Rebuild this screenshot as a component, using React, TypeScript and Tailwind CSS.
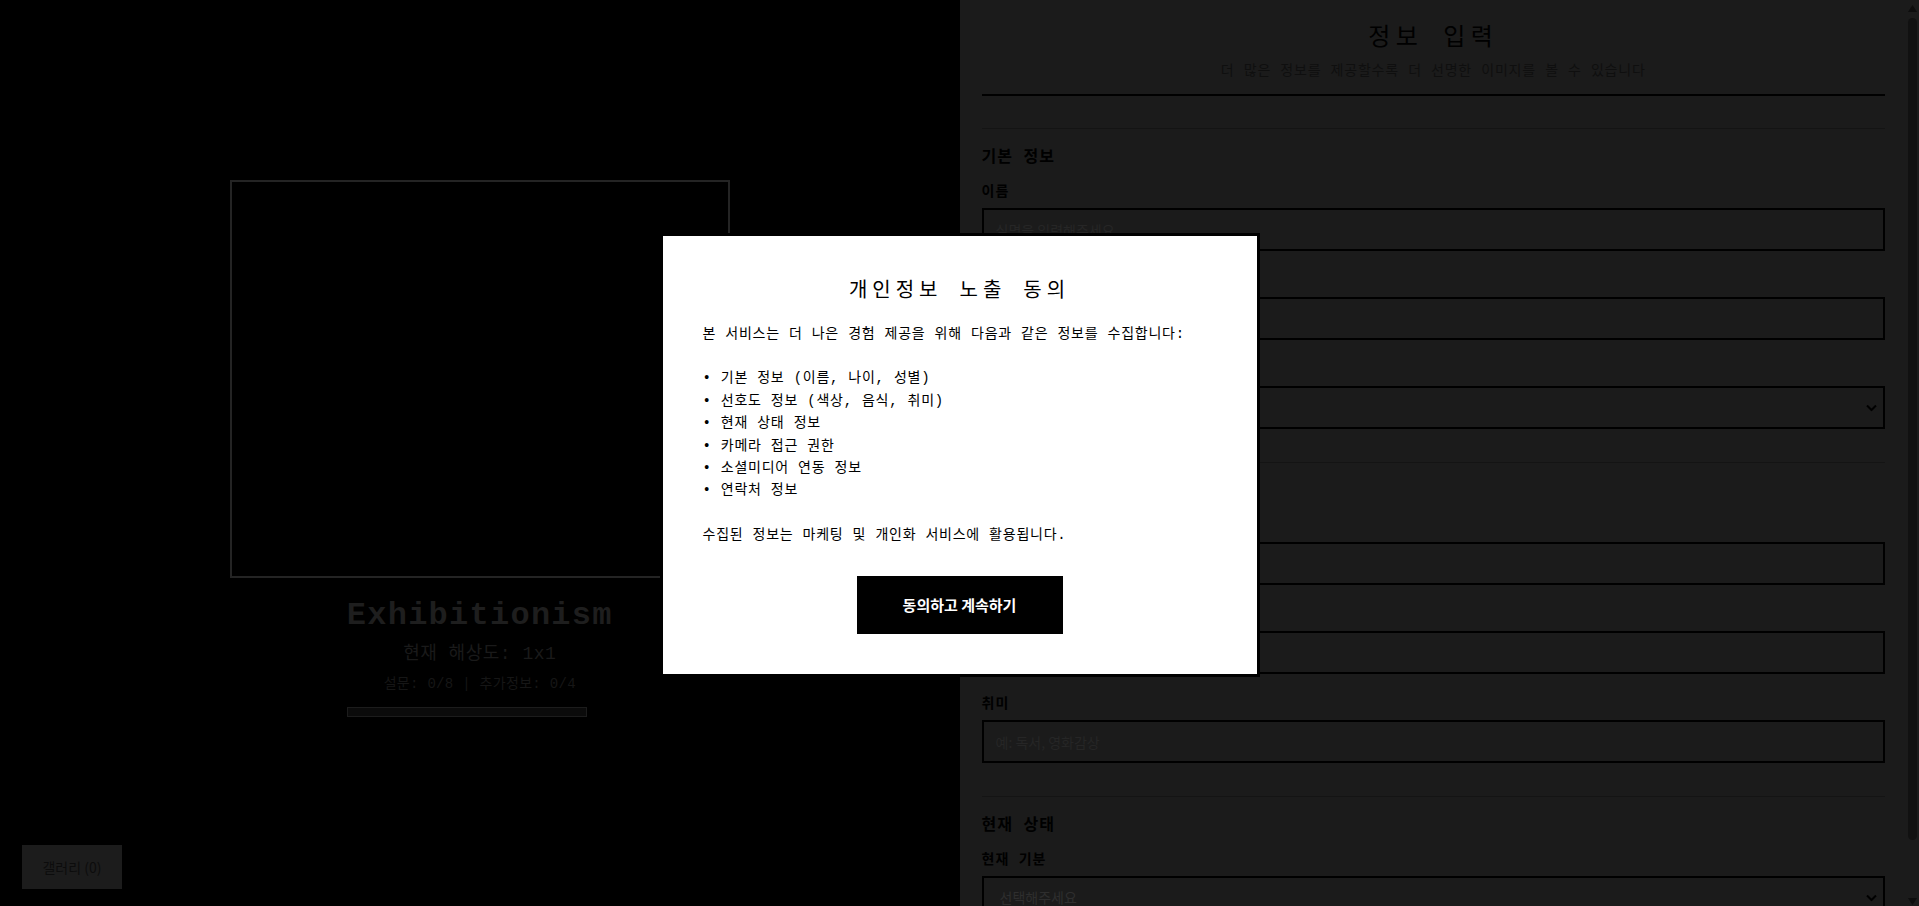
import React from 'react';

const mono = "font-['Liberation_Mono','Noto_Sans_CJK_KR',monospace]";
const sans = "font-['Noto_Sans_CJK_KR','Noto_Sans',sans-serif]";

interface FieldProps {
  label: string;
  placeholder?: string;
  select?: boolean;
}

const Chevron: React.FC = () => (
  <svg
    className="pointer-events-none absolute right-[8px] top-1/2 -translate-y-1/2"
    width="11"
    height="7"
    viewBox="0 0 11 7"
    fill="none"
  >
    <polyline points="1,1 5.5,5.5 10,1" stroke="#000" strokeWidth="2" />
  </svg>
);

const Field: React.FC<FieldProps> = ({ label, placeholder, select }) => (
  <div className="flex flex-col">
    <label className="mb-[6px] text-[14px] leading-[20px] font-bold tracking-[1px] text-black">{label}</label>
    {select ? (
      <div className="relative">
        <select
          defaultValue=""
          className={`${sans} h-[43px] w-full appearance-none border-2 border-black bg-transparent pl-4 text-[14px] text-[#2e2e2e] outline-none`}
        >
          <option value="">선택해주세요</option>
        </select>
        <Chevron />
      </div>
    ) : (
      <input
        placeholder={placeholder}
        className={`${sans} h-[43px] w-full border-2 border-black bg-transparent px-3 text-[14px] text-black outline-none placeholder:text-[#262626]`}
      />
    )}
  </div>
);

const Section: React.FC<{ title: string; children: React.ReactNode }> = ({ title, children }) => (
  <section className="border-t border-[#141414] pt-[17px] pb-[33px]">
    <h3 className="mb-3 text-[16px] leading-[24px] font-bold tracking-[1px] text-black">{title}</h3>
    <div className="flex flex-col gap-5">{children}</div>
  </section>
);

// the page scrollbar, drawn since the screenshot browser hides native ones
const ScrollTrack: React.FC = () => (
  <div className="flex w-[15px] shrink-0 flex-col items-center bg-[#1b1b1b] pl-[1px]">
    <svg className="mt-[5px]" width="9" height="7" viewBox="0 0 9 7">
      <polygon points="4.5,0 9,7 0,7" fill="#0d0d0d" />
    </svg>
    <div className="mt-[6px] h-[822px] w-[9px] rounded-full bg-[#111]" />
    <div className="flex-1" />
    <svg className="mb-[1px]" width="9" height="7" viewBox="0 0 9 7">
      <polygon points="0,0 9,0 4.5,7" fill="#0d0d0d" />
    </svg>
  </div>
);

const consentText = `본 서비스는 더 나은 경험 제공을 위해 다음과 같은 정보를 수집합니다:

• 기본 정보 (이름, 나이, 성별)
• 선호도 정보 (색상, 음식, 취미)
• 현재 상태 정보
• 카메라 접근 권한
• 소셜미디어 연동 정보
• 연락처 정보

수집된 정보는 마케팅 및 개인화 서비스에 활용됩니다.`;

export default function App() {
  return (
    <div className={`${mono} flex h-[906px] w-full overflow-hidden`}>
      {/* left: preview */}
      <div className="flex w-1/2 flex-col items-center justify-center bg-black pb-[9px]">
        <div className="h-[398px] w-[500px] border-2 border-[#242424]" />
        <div className="text-center">
          <h1 className="mt-[18px] text-[32px] leading-[40px] font-bold tracking-[1.25px] text-[#1e1e1e]">Exhibitionism</h1>
          <p className="mt-[6px] text-[18px] leading-[24px] tracking-[0.5px] text-[#1a1a1a]">현재 해상도: 1x1</p>
          <p className="mt-2 text-[14px] leading-[20px] tracking-[0.3px] text-[#161616]">설문: 0/8 | 추가정보: 0/4</p>
          <div className="mt-[13px] h-[10px] w-[240px] border border-[#1c1c1c] bg-[#0b0b0b]" />
        </div>
      </div>

      {/* right: form */}
      <div className="flex h-full w-1/2 bg-[#1b1b1b]">
        <div className="h-full flex-1 overflow-y-auto pt-5 pr-[19px] pb-5 pl-[22px]">
          <header className="mb-[32px] border-b-2 border-black pb-[13px] text-center">
            <h2 className="mt-[4px] text-[24px] leading-[30px] tracking-[5.5px] text-black">정보 입력</h2>
            <p className="mt-[7px] text-[14px] leading-[20px] tracking-[0.8px] text-[#0f0f0f]">
              더 많은 정보를 제공할수록 더 선명한 이미지를 볼 수 있습니다
            </p>
          </header>

          <Section title="기본 정보">
            <Field label="이름" placeholder="실명을 입력해주세요" />
            <Field label="나이" placeholder="나이를 입력해주세요" />
            <Field label="성별" select />
          </Section>

          <Section title="선호도">
            <Field label="좋아하는 색상" placeholder="예: 빨강, 파랑" />
            <Field label="좋아하는 음식" placeholder="예: 피자, 초밥" />
            <Field label="취미" placeholder="예: 독서, 영화감상" />
          </Section>

          <Section title="현재 상태">
            <Field label="현재 기분" select />
          </Section>
        </div>
        <ScrollTrack />
      </div>

      <button
        className={`${sans} fixed bottom-[17px] left-[22px] h-[44px] w-[100px] bg-[#1c1c1c] text-[14px] text-[#0c0c0c]`}
      >
        갤러리 (0)
      </button>

      {/* consent modal */}
      <div className="fixed inset-0 z-50 flex items-center justify-center pt-[4px]">
        <div className="w-[600px] border-[3px] border-black bg-white p-10">
          <h2 className="mt-[2px] mb-[17px] text-center text-[20px] leading-[28px] tracking-[5px] text-black">개인정보 노출 동의</h2>
          <p className="text-[14px] leading-[1.6] tracking-[0.75px] whitespace-pre-line text-black">{consentText}</p>
          <button
            className={`${sans} mx-auto mt-[30px] block h-[58px] w-[206px] bg-black text-[15px] font-bold text-white`}
          >
            동의하고 계속하기
          </button>
        </div>
      </div>
    </div>
  );
}
